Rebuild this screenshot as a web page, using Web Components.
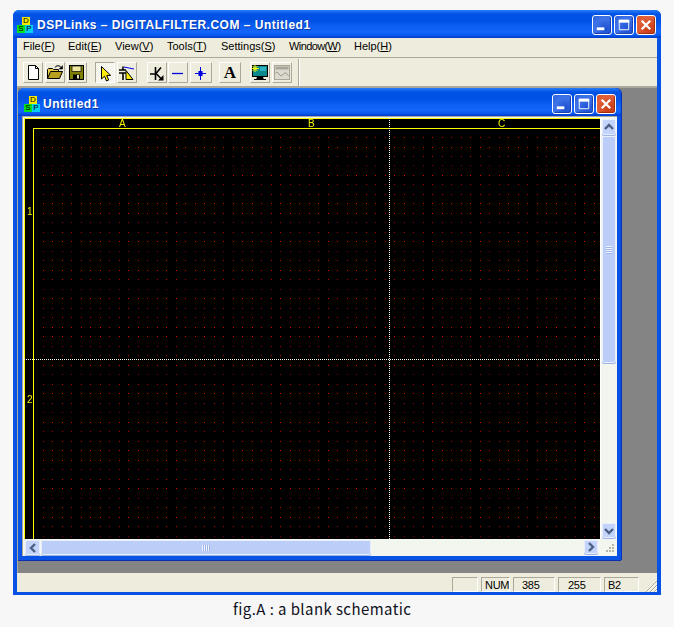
<!DOCTYPE html>
<html lang="en"><head><meta charset="utf-8"><title>DSPLinks</title>
<style>
html,body{margin:0;padding:0;background:#f7f7f7}
body{width:674px;height:627px;overflow:hidden;font-family:"Liberation Sans",sans-serif}
</style></head><body>
<app-figure>
  <app-window main title-text="DSPLinks – DIGITALFILTER.COM – Untitled1">
    <app-menubar></app-menubar>
    <app-toolbar></app-toolbar>
    <app-mdi>
      <app-window title-text="Untitled1">
        <app-client></app-client>
      </app-window>
    </app-mdi>
    <app-statusbar></app-statusbar>
  </app-window>
</app-figure>
<script>
function def(name, css, html, init){
  customElements.define(name, class extends HTMLElement{
    connectedCallback(){
      if(this.shadowRoot) return;
      const r=this.attachShadow({mode:'open'});
      r.innerHTML='<style>'+css+'</style>'+(typeof html==='function'?html(this):html);
      if(init) init(r,this);
    }
  });
}
def('app-figure',`
:host{display:block;padding:10px 0 0 13px}
.cap{margin-top:4px;width:648px;height:22px;box-sizing:border-box;padding-left:220px;font:15px/20px "Noto Sans CJK JP","Noto Sans",sans-serif;color:#101020;letter-spacing:.42px;white-space:nowrap}
`,`<slot></slot><div class="cap">fig.A : a blank schematic</div>`);

def('app-logo',`
:host{display:grid;grid-template-columns:8px 8px;grid-template-rows:8px 8px;width:16px;height:16px;flex:none;font:8px/8px "Liberation Sans",sans-serif;color:#000;text-align:center}
div{overflow:hidden}
.d{grid-column:1/3;width:8px;margin-left:5px;background:#f4e800}
.s{background:#00e020}.p{background:#00d0f0}
`,`<div class="d">D</div><div class="s">S</div><div class="p">P</div>`);

const btnIcons={
 min:'<rect x="4" y="12" width="8" height="3" fill="#fff"/>',
 max:'<path d="M4.5 4.5h10v10h-10z" fill="none" stroke="#fff"/><rect x="4" y="4" width="11" height="3" fill="#fff"/>',
 close:'<path d="M5 5l9 9M14 5l-9 9" stroke="#fff" stroke-width="2.4" fill="none"/>'};
def('app-capbtn',`
:host{display:block;width:20px;height:20px;box-sizing:border-box;border:1px solid #fff;border-radius:3px;background:radial-gradient(circle at 70% 75%,#1c4fd0,#3f74e8 60%,#2a5fdc);box-shadow:inset -1px -1px 1px #1a3fb0}
:host([kind=close]){background:radial-gradient(circle at 70% 75%,#c83a12,#e2623c 70%,#d84c24);box-shadow:inset -1px -1px 1px #a02a0c}
svg{display:block;width:18px;height:18px}
`,h=>`<svg viewBox="0 0 19 19">${btnIcons[h.getAttribute('kind')]}</svg>`);

def('app-window',`
:host{display:flex;flex-direction:column;box-sizing:border-box;width:603px;height:472px;background:#0853e4;border-radius:6px 6px 0 0;border:solid #0853e4;border-width:0 4px 4px 4px;box-shadow:inset 0 -1px #0a38c0,0 1px #0a2fb0,1px 0 #0a30b8,inset 1px 0 #0a50e0}
:host([main]){width:648px;height:585px;box-shadow:inset 0 -1px #0a30c0}
.bar{display:flex;align-items:center;height:28px;flex:none;margin:0 -4px;padding:3px 5px 0 6px;box-sizing:border-box;border-radius:6px 6px 0 0;
background:linear-gradient(180deg,#2a7cf5 0,#1468f0 2px,#0052e4 4px,#0050e4 11px,#0a5cf0 15px,#1466fa 22px,#0a5cf0 25px,#0044d8 27px,#003ccc 28px)}
:host([main]) .bar{padding:2px 5px 0 4px}
.t{flex:1;margin-left:3px;color:#fff;font:bold 12px/16px "Liberation Sans",sans-serif;letter-spacing:.5px;white-space:nowrap;overflow:hidden;text-shadow:1px 1px 0 #0a3aa8}
:host([main]) .t{margin-left:4px}
.b{display:flex;gap:2px}
slot{display:block}
`,h=>`<div class="bar"><app-logo></app-logo><div class="t">${h.getAttribute('title-text')}</div><div class="b"><app-capbtn kind="min"></app-capbtn><app-capbtn kind="max"></app-capbtn><app-capbtn kind="close"></app-capbtn></div></div><slot></slot>`);

const menus=[['File','F',45,0],['Edit','E',47,0],['View','V',52,0],['Tools','T',54,0],['Settings','S',68,0],['Window','W',65,-.6],['Help','H',40,0]];
def('app-menubar',`
:host{display:flex;height:20px;box-sizing:border-box;padding:0 0 0 6px;background:#eeeddd;border-bottom:1px solid #aca899;font:11px/17px "Liberation Sans",sans-serif;color:#000;white-space:nowrap}
span{flex:none}
u{text-underline-offset:1px}
`,menus.map(m=>`<span style="width:${m[2]}px;letter-spacing:${m[3]}px">${m[0]}(<u>${m[1]}</u>)</span>`).join(''));

const I={
new:'<path d="M4.5 1.5h7l3 3v11h-10z" fill="#fff" stroke="#000"/><path d="M11.5 1.5v3h3" fill="none" stroke="#000"/>',
open:'<path d="M1.5 14.5v-9l1-1h4l1 1h5v2" fill="#e8d048" stroke="#000"/><path d="M1.5 14.5l3-7h12l-3 7z" fill="#b8a020" stroke="#000"/><path d="M9 3.5c2-2.5 4-2.5 6 0" fill="none" stroke="#3a3a3a" stroke-width="1.2"/><path d="M16.5 1.5v3.5h-3.5" fill="#000" stroke="#000" stroke-width=".6"/>',
save:'<rect x="1.5" y="1.5" width="14" height="14" fill="#808000" stroke="#000"/><rect x="4" y="2" width="9" height="5.5" fill="#f0e8a0" stroke="#000" stroke-width=".7"/><rect x="5" y="10.5" width="7" height="5" fill="#000"/><rect x="9" y="11" width="2" height="3.5" fill="#e8e0c0"/>',
arrow:'<path d="M5.5 2.5v12.5l3-2.8 2 4.8 2.2-1-2-4.6h4z" fill="#ffee00" stroke="#000"/>',
sel:'<path d="M1 6h7M5 2.5v3.500M1 9h7M5 9v7" stroke="#000" stroke-width="1.6" fill="none"/><path d="M6 3l10 2" stroke="#0000f0" fill="none"/><path d="M8 6.500l7 9h-7z" fill="#ffee00" stroke="#000"/>',
k:'<path d="M7.500 3v13M2 10h5M8 9.500l5-6M8 9.500l5 5" stroke="#000" stroke-width="1.600" fill="none"/><path d="M15.500 16.500v-5.500l-5.500 5.500z" fill="#000"/>',
line:'<path d="M3 9.500h11" stroke="#0000e0" stroke-width="1.300"/>',
dot:'<path d="M8.500 3v13M3 9.500h11" stroke="#0000e0"/><rect x="6.500" y="7" width="4" height="5" fill="#0000e0"/>',
mon:'<rect x="1.500" y="1.500" width="15" height="11" fill="#0a8a8a" stroke="#000"/><rect x="9" y="3" width="6" height="4" fill="#30b0c0"/><path d="M4 1v7M1 4.500h7M1.500 2l5 5M6.500 2l-5 5" stroke="#ffff00"/><path d="M6 13.500h6v1.500h-6zM3 15.500h12" stroke="#000" fill="#000"/>',
graph:'<rect x="1.500" y="1.500" width="15" height="14" fill="#dcdad0" stroke="#a8a698"/><rect x="2.500" y="2.500" width="13" height="3" fill="#a8a698"/><path d="M2.500 9c3-3 4 5 7 2s3-3 6 1" fill="none" stroke="#908e80"/>'
};
def('app-tool',`
:host{display:flex;align-items:center;justify-content:center;flex:none;box-sizing:border-box;width:var(--w,20px);height:21px;background:#eeeddd;border:1px solid;border-color:#fff #aca899 #aca899 #fff}
:host([pressed]){border-color:#aca899 #fff #fff #aca899;background:repeating-conic-gradient(#fff 0 25%,#eeeddd 0 50%) 0 0/2px 2px}
svg{display:block;width:18px;height:18px}
.a{font:bold 17px/18px "Liberation Serif",serif;color:#000}
`,h=>{const n=h.getAttribute('icon');return n==='A'?'<span class="a">A</span>':`<svg viewBox="0 0 18 18">${I[n]}</svg>`});

def('app-toolbar',`
:host{display:flex;align-items:center;box-sizing:border-box;height:29px;padding:1px 0 0 6px;background:#eeeddd;border-bottom:1px solid #aca899}
.g{display:flex;gap:2px;flex:none}
.sep{width:0;height:27px;border-left:1px solid #aca899;border-right:1px solid #fff}
`,`<div class="g"><app-tool icon="new"></app-tool><app-tool icon="open"></app-tool><app-tool icon="save"></app-tool></div>
<div class="g" style="margin-left:8px"><app-tool icon="arrow" pressed></app-tool><app-tool icon="sel"></app-tool></div>
<div class="g" style="margin-left:10px"><app-tool icon="k"></app-tool><app-tool icon="line" style="margin-left:-1px"></app-tool><app-tool icon="dot" style="--w:22px"></app-tool></div>
<div class="g" style="margin-left:7px"><app-tool icon="A" style="--w:22px"></app-tool></div>
<div class="g" style="margin-left:9px"><app-tool icon="mon"></app-tool><app-tool icon="graph"></app-tool></div>
<div class="sep" style="margin-left:6px"></div>`);

def('app-mdi',`
:host{display:block;height:486px;box-sizing:border-box;background:#848484;padding-top:1px;border-left:1px solid #a8a8a0;box-shadow:inset 0 1px #a8a8a0;overflow:hidden}
`,`<slot></slot>`);

def('app-client',`
:host{display:grid;grid-template-columns:577px 16px;grid-template-rows:421px 17px;height:440px;box-sizing:border-box;padding:2px 0 0 2px;background:#f3f6ee;box-shadow:inset 1px 1px #aca899}
app-schematic{grid-area:1/1}
app-scroll[dir=v]{grid-area:1/2}
app-scroll[dir=h]{grid-area:2/1}
.grip{grid-area:2/2;display:flex;align-items:flex-end;justify-content:flex-end;padding:0 2px 3px 0}
svg{display:block}
`,`<app-schematic></app-schematic><app-scroll dir="v"></app-scroll><app-scroll dir="h"></app-scroll><div class="grip"><svg width="9" height="10" viewBox="0 0 9 10" fill="#b8b4a4"><rect x="6" y="1" width="2" height="2"/><rect x="3" y="4" width="2" height="2"/><rect x="6" y="4" width="2" height="2"/><rect x="0" y="7" width="2" height="2"/><rect x="3" y="7" width="2" height="2"/><rect x="6" y="7" width="2" height="2"/></svg></div>`);

const ch={up:'M2 8l4-4 4 4',down:'M2 4l4 4 4-4',left:'M8 2l-4 4 4 4',right:'M4 2l4 4-4 4'};
const sb=(d,w,h)=>`<div class="btn" style="width:${w}px;height:${h}px"><svg width="12" height="12" viewBox="0 0 12 12"><path d="${ch[d]}" fill="none" stroke="#4d6185" stroke-width="2.400"/></svg></div>`;
def('app-scroll',`
:host{display:flex;box-sizing:border-box;background:#f3f6ee}
:host([dir=v]){flex-direction:column;padding:1px;align-items:center}
:host([dir=h]){padding:1px 3px 0 1px;align-items:flex-start}
.btn{display:flex;align-items:center;justify-content:center;flex:none;box-sizing:border-box;background:#c3d3fb;border:1px solid #e8eefc;border-radius:2px;box-shadow:0 1px 0 #9db4e8}
.th{flex:none;box-sizing:border-box;background:#bccdf8;border:1px solid #e8eefc;border-radius:2px;display:flex;align-items:center;justify-content:center;box-shadow:0 1px 0 #9db4e8}
:host([dir=v]) .th{width:14px;height:227px;margin-top:1px}
:host([dir=h]) .th{width:330px;height:15px;margin-left:1px}
.sp{flex:1}
i{display:block;background:repeating-linear-gradient(90deg,#f0f4ff 0 1px,#9fb4ea 1px 2px);width:8px;height:6px}
:host([dir=v]) i{background:repeating-linear-gradient(180deg,#f0f4ff 0 1px,#9fb4ea 1px 2px);width:6px;height:8px}
`,h=>h.getAttribute('dir')==='v'
 ?sb('up',14,16)+'<div class="th"><i></i></div><div class="sp"></div>'+sb('down',14,15)
 :sb('left',15,15)+'<div class="th"><i></i></div><div class="sp"></div>'+sb('right',14,14));

def('app-schematic',`
:host{display:block;position:relative;background:#000;overflow:hidden;font:10px/9px "Liberation Sans",sans-serif;color:#f0f000;border-right:1px solid #fff;box-sizing:border-box;width:577px;height:421px}
canvas{position:absolute;left:0;top:0}
.f{position:absolute;left:0;top:0;right:0;bottom:0;border:solid #ffff00;border-width:1px 0 0 1px}
.f2{position:absolute;left:9px;top:10px;right:0;bottom:0;border:solid #ffff00;border-width:1px 0 0 1px}
b{position:absolute;font-weight:normal}
.cv{position:absolute;left:365px;top:0;bottom:0;width:1px;background:repeating-linear-gradient(180deg,#fffff0 0 1px,transparent 1px 2px)}
.ch{position:absolute;top:241px;left:0;right:0;height:1px;background:repeating-linear-gradient(90deg,#fffff0 0 1px,transparent 1px 2px)}
`,`<canvas width="576" height="421"></canvas><div class="f"></div><div class="f2"></div>
<b style="left:95px;top:1px">A</b><b style="left:284px;top:1px">B</b><b style="left:474px;top:1px">C</b>
<b style="left:3px;top:89px">1</b><b style="left:3px;top:277px">2</b><div class="cv"></div><div class="ch"></div>`,
r=>{const c=r.querySelector('canvas').getContext('2d');
 const rows=[.85,1,.8,.55,1,.75,.85,1,1,.7,.8,1,.6],cols=[.9,1,1,.85];
 for(let j=0;j<43;j++){let y=Math.floor(137+9.5*j)-118;if(j===1)y=29;
  for(let i=0;i<59;i++){const x=43+Math.floor(i*9.5)-24;
   c.fillStyle=`rgba(255,0,0,${rows[j%13]*cols[i%4]})`;c.fillRect(x,y,1,1);}}
});

def('app-statusbar',`
:host{display:flex;align-items:flex-end;justify-content:flex-end;gap:3px;height:19px;box-sizing:border-box;background:#eeeddd;padding:0 18px 0 0;font:11px/14px "Liberation Sans",sans-serif;color:#000;letter-spacing:-.3px;position:relative}
span{display:block;box-sizing:border-box;height:15px;padding-left:3px;border:1px solid;border-color:#aca899 #fff #fff #aca899;white-space:nowrap}
svg{position:absolute;right:0;bottom:0}
`,`<span style="width:26px"></span><span style="width:29px">NUM</span><span style="width:42px;padding-left:8px">385</span><span style="width:43px;padding-left:9px">255</span><span style="width:35px">B2</span><svg width="12" height="12" viewBox="0 0 12 12" fill="none"><path d="M1 12L12 1M5 12l7-7M9 12l3-3" stroke="#aca899"/><path d="M2 12L12 2M6 12l6-6M10 12l2-2" stroke="#fff"/></svg>`);
</script>
</body></html>
